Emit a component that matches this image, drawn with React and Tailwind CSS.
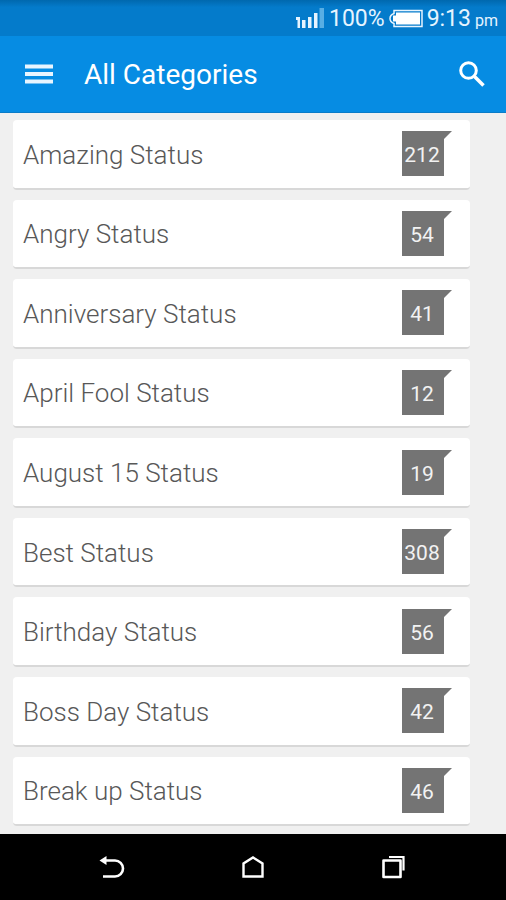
import React from "react";

const categories = [
  { name: "Amazing Status", count: 212 },
  { name: "Angry Status", count: 54 },
  { name: "Anniversary Status", count: 41 },
  { name: "April Fool Status", count: 12 },
  { name: "August 15 Status", count: 19 },
  { name: "Best Status", count: 308 },
  { name: "Birthday Status", count: 56 },
  { name: "Boss Day Status", count: 42 },
  { name: "Break up Status", count: 46 },
];

const StatusBar = () => {
  return (
    <div className="flex h-9 items-center justify-end bg-linear-to-b from-[#0068ae] from-0% via-[#047bcb] via-20% to-[#047bcb] pt-[2px] pr-2 text-[#e6f4ff]">
      <svg width="30" height="22" viewBox="0 0 30 22" aria-hidden="true">
        <path d="M1 9h4v11h-2.500v-8h-1.500z" fill="#e6f4ff" />
        <path d="M7 12h3.500v8h-3.500zM13 9h3.500v11h-3.500zM19 5h3.500v15h-3.500z" fill="#e6f4ff" />
        <path d="M24.500 0h4.500v20h-4.500z" fill="#58aee4" />
      </svg>
      <span className="ml-1 text-[23px] leading-8">100%</span>
      <svg className="ml-1" width="34" height="20" viewBox="0 0 34 20" aria-hidden="true">
        <path
          d="M5 1.500h28v16H5v-3Q1 13 1 9.500T5 4.500z"
          fill="none"
          stroke="#e6f4ff"
          strokeWidth="1.5"
        />
        <path d="M7 3.500h24v12H7v-3H4v-6h3z" fill="#fff" />
      </svg>
      <span className="ml-1 text-[23px] leading-8">9:13</span>
      <span className="ml-1 pt-1 text-base leading-7">pm</span>
    </div>
  );
};

const Header = () => {
  return (
    <header className="flex h-[77px] items-center border-b border-[#0a7cc8] bg-[#068ce3] pr-5 pl-6 text-white">
      <button type="button" aria-label="Menu">
        <svg width="30" height="22" viewBox="0 0 30 22">
          <path d="M1 3.500h28M1 11h28M1 18.500h28" stroke="#e8f5ff" strokeWidth="4" />
        </svg>
      </button>
      <h1 className="ml-[30px] flex-1 pt-[2px] text-[28px] leading-9">All Categories</h1>
      <button type="button" aria-label="Search">
        <svg width="28" height="28" viewBox="0 0 28 28" fill="none" stroke="#fff">
          <circle cx="10.5" cy="10.5" r="7.8" strokeWidth="3" />
          <path d="M16.5 16.5L25.5 25.5" strokeWidth="3.6" />
        </svg>
      </button>
    </header>
  );
};

const CategoryCard = ({ name, count }) => {
  return (
    <li className="flex flex-1 border-b-2 border-[#d8d8d8] bg-white rounded-sm">
      <a href="#" className="flex flex-1 items-center justify-between pr-[18px] pl-[10px]">
        <span className="pt-[2px] text-[26px] font-light leading-8 text-[#585858]">{name}</span>
        <span className="relative flex h-[45px] w-[50px]">
          <svg className="absolute inset-0" width="50" height="45" viewBox="0 0 50 45" aria-hidden="true">
            <path d="M0 0H50L42 8V45H0z" fill="#747474" />
          </svg>
          <span className="relative w-10 text-center text-[21px] leading-[48px] text-[#f2f2f2]">
            {count}
          </span>
        </span>
      </a>
    </li>
  );
};

const NavBar = () => {
  return (
    <nav className="flex h-[66px] items-center justify-center gap-[113px] bg-black">
      <button type="button" aria-label="Back">
        <svg width="28" height="28" viewBox="0 0 28 28" fill="none" stroke="#fff">
          <path d="M6 7.500h11a8 8 0 0 1 0 16H5" strokeWidth="2.6" />
          <path d="M1.500 7.500L8.500 3v9z" fill="#fff" stroke="none" />
        </svg>
      </button>
      <button type="button" aria-label="Home">
        <svg width="28" height="28" viewBox="0 0 28 28" fill="none" stroke="#fff">
          <path d="M4.500 23.500V10.500L14 4.500L23.500 10.500V23.500z" strokeWidth="2.4" />
        </svg>
      </button>
      <button type="button" aria-label="Recent apps">
        <svg width="28" height="28" viewBox="0 0 28 28" fill="none" stroke="#fff">
          <path d="M3.500 7.500h17v16.500h-17z" strokeWidth="2.6" strokeLinejoin="round" />
          <path d="M9 4H23.500V17.500" strokeWidth="2.2" />
        </svg>
      </button>
    </nav>
  );
};

const App = () => {
  return (
    <div className="flex min-h-screen flex-col bg-[#f0f0f0] font-['Roboto',sans-serif]">
      <StatusBar />
      <Header />
      <main className="flex flex-1 flex-col pt-[7px] pr-9 pb-2 pl-[13px]">
        <ul className="flex flex-1 flex-col gap-[10px]">
          {categories.map((category) => (
            <CategoryCard key={category.name} name={category.name} count={category.count} />
          ))}
        </ul>
      </main>
      <NavBar />
    </div>
  );
};

export default App;
